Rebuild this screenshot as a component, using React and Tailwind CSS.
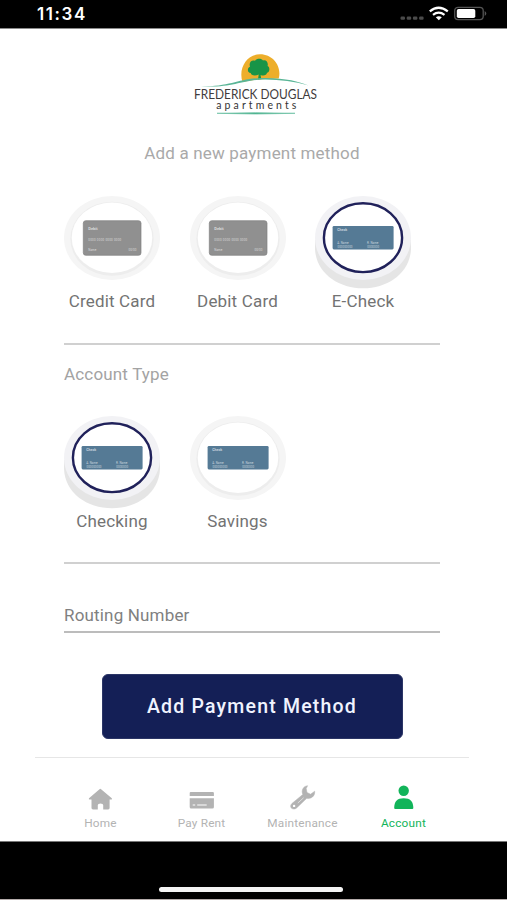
import React, { useState } from 'react';

const METHODS = [
  { key: 'credit', label: 'Credit Card', art: 'card' },
  { key: 'debit', label: 'Debit Card', art: 'card' },
  { key: 'echeck', label: 'E-Check', art: 'check' },
];

const ACCOUNT_TYPES = [
  { key: 'checking', label: 'Checking', art: 'check' },
  { key: 'savings', label: 'Savings', art: 'check' },
];

const TABS = [
  { key: 'home', label: 'Home', icon: HomeIcon },
  { key: 'pay', label: 'Pay Rent', icon: CardIcon },
  { key: 'maintenance', label: 'Maintenance', icon: WrenchIcon },
  { key: 'account', label: 'Account', icon: PersonIcon },
];

function HomeIcon() {
  return (
    <svg width="26" height="24" viewBox="0 0 26 24" fill="currentColor">
      <path d="M11.5 2.2 Q12.3 1.5 13.1 2.2 L23.8 11.2 Q24.5 12.3 23.3 12.6 H21.6 V21 Q21.6 22.4 20.1 22.4 H15.2 V18 Q15.2 16.4 12.5 16.4 Q9.8 16.4 9.8 18 V22.4 H5 Q3.5 22.4 3.5 21 V12.6 H1.6 Q0.3 12.3 1 11.2 Z" />
    </svg>
  );
}

function CardIcon() {
  return (
    <svg width="26" height="24" viewBox="0 0 26 24">
      <path d="M1.7 5 H23.9 Q24.9 5 24.9 6 V9 H0.7 V6 Q0.7 5 1.7 5 Z" fill="currentColor" />
      <path d="M0.7 11.3 H24.9 V20 Q24.9 21.5 23.4 21.5 H2.2 Q0.7 21.5 0.7 20 Z" fill="currentColor" />
      <path d="M3.7 18 H6.2 M8.2 18 H17.7" stroke="#fff" strokeWidth="1.2" />
    </svg>
  );
}

function WrenchIcon() {
  return (
    <svg width="26" height="24" viewBox="0 0 26 24" className="overflow-visible">
      <path
        d="M17.6 -1.3 C12.8 -0.6 11.2 3.6 12.8 7.5 L1.9 16.5 C-0.4 18.8 0.6 22 3.8 22 C5.4 22 6.5 21.2 7.4 20.2 L16.8 11.2 C21 12.2 25.2 9.2 24.7 4.2 L20.6 7.2 L17 5.5 L16.2 1.6 Z"
        fill="currentColor"
        stroke="currentColor"
        strokeWidth="0.5"
        strokeLinejoin="round"
      />
      <circle cx="4.1" cy="18.9" r="1.2" fill="#fff" />
      <path d="M7.8 16 L13.6 10.8" stroke="#dedede" strokeWidth="1" />
    </svg>
  );
}

function PersonIcon() {
  return (
    <svg width="26" height="24" viewBox="0 0 26 24" fill="currentColor" className="overflow-visible">
      <ellipse cx="12.7" cy="3.7" rx="5.2" ry="5.2" />
      <path d="M3.2 21 C3.2 14.5 6.1 11.3 12.7 11.3 C19.3 11.3 22.3 14.5 22.3 21 Q22.3 22 21.3 22 H4.2 Q3.2 22 3.2 21 Z" />
    </svg>
  );
}

function StatusBar() {
  return (
    <header className="flex h-7 shrink-0 items-center justify-between bg-black pl-[37px] pr-[19px]">
      <span className="font-['Inter',sans-serif] text-[17px] font-semibold leading-7 tracking-[1.6px] text-white">11:34</span>
      <svg width="88" height="16" viewBox="0 0 88 16" className="-mt-px">
        <g fill="#4b4b4b">
          <rect x="0.5" y="10.5" width="4.5" height="3.2" rx="1.2" />
          <rect x="6.7" y="10.5" width="4.5" height="3.2" rx="1.2" />
          <rect x="12.9" y="10.5" width="4.5" height="3.2" rx="1.2" />
          <rect x="19.1" y="10.5" width="4.5" height="3.2" rx="1.2" />
        </g>
        <g fill="none" stroke="#fff" strokeWidth="2.3">
          <path d="M29.8 5.3 Q38.5 -1.8 47.8 5.3" />
          <path d="M33 8.8 Q38.7 4.5 44.5 8.8" />
        </g>
        <path d="M35.8 11.3 Q38.8 9 41.8 11.3 L38.8 14.2 Z" fill="#fff" />
        <rect x="54.7" y="1.3" width="28.5" height="12.4" rx="3.4" fill="none" stroke="#555" strokeWidth="1.3" />
        <rect x="56.8" y="3" width="18.5" height="9" rx="1.8" fill="#fff" />
        <path d="M84.7 5 Q88 7.5 84.7 10 Z" fill="#555" />
      </svg>
    </header>
  );
}

function Logo() {
  return (
    <svg width="132" height="70" viewBox="0 0 132 70" className="shrink-0 overflow-visible">
      <path d="M52.5 32 C48 18 57 4.3 70 4.3 C83.5 4.3 92 17 88.7 28.5 Q70 28.5 52.5 32 Z" fill="#edae2b" />
      <path
        d="M68 29.5 L68.7 24.6 C65 26.2 60.8 25.4 60.7 23 C57.4 23 56.8 18 60 16.8 C58.5 12 62 9.5 65 10.8 C67 8 71.5 8.3 73 10.5 C76.5 9.5 78.5 13 77.6 16 C80.6 17.5 79.4 22.6 77 22.8 C76.7 25.7 73 26 70.6 25 L71.2 29 Z"
        fill="#189447"
      />
      <path d="M11 36.5 C42 36.5 48 28.5 72 28 C94 27.5 109 31.5 118 35.3 C104 31.5 89 29.4 73 29.6 C52 30 43 38 11 36.5 Z" fill="#59b596" />
      <text x="4" y="49.2" textLength="123" lengthAdjust="spacingAndGlyphs" fill="#3f3b3c" className="font-['Lato',sans-serif] text-[12.8px]">
        FREDERICK DOUGLAS
      </text>
      <text x="26.3" y="59.2" textLength="80" lengthAdjust="spacing" fill="#353334" className="font-['Lato',sans-serif] text-[10.5px]">
        apartments
      </text>
      <path d="M27 63.3 Q65 62 105 63.3 Q65 64.8 27 63.3 Z" fill="#3fae87" stroke="#6bc0a4" strokeWidth="0.7" />
    </svg>
  );
}

function CardArt() {
  return (
    <g>
      <rect x="19.3" y="25.7" width="57.7" height="34.6" rx="2.5" fill="#909090" stroke="#828282" strokeWidth="0.7" />
      <g fill="#dadada" className="font-['Roboto',sans-serif]">
        <text x="24.3" y="34.8" className="text-[4px] font-bold">Debit</text>
        <text x="24.3" y="45.6" textLength="33" className="text-[3px]">0000 0000 0000 0000</text>
        <text x="24.3" y="55.6" className="text-[3px]">Name</text>
        <text x="64.5" y="55.6" className="text-[3px]">00/00</text>
      </g>
    </g>
  );
}

function CheckArt() {
  return (
    <g>
      <rect x="17.6" y="31" width="61" height="23.4" rx="1.3" fill="#557a95" />
      <g fill="#c5d3dc" className="font-['Roboto',sans-serif]">
        <text x="22.2" y="35.8" className="text-[3.6px] font-bold">Check</text>
        <text x="22.2" y="48.6" className="text-[3px]">A. Name</text>
        <text x="22.5" y="52.9" textLength="15" className="text-[3px]">000000000</text>
        <text x="52" y="48.6" className="text-[3px]">R. Name</text>
        <text x="52.3" y="52.9" className="text-[3px]">0000000</text>
      </g>
    </g>
  );
}

// Round selector, raised on a thick grey base when selected
function Disc({ art, selected }) {
  return (
    <svg width="96" height="94" viewBox="0 0 96 94" className="block">
      {selected && <path d="M0 45 V54 C1 78 23 93.3 48 93.3 C73 93.3 95 78 96 54 V45 Z" fill="#e5e5e5" />}
      <ellipse cx="48" cy="43" rx="48" ry="42" fill={selected ? '#f2f2f5' : '#f5f5f5'} />
      {!selected && <ellipse cx="48" cy="43.8" rx="41.7" ry="37" fill="#ededed" />}
      <ellipse
        cx="48"
        cy="42.7"
        rx={selected ? 39.1 : 40.3}
        ry={selected ? 34.4 : 35.2}
        fill="#fff"
        stroke={selected ? '#20215a' : 'none'}
        strokeWidth="2.4"
      />
      {art === 'card' ? <CardArt /> : <CheckArt />}
    </svg>
  );
}

function OptionRow({ options, value, onChange }) {
  return (
    <div className="flex gap-[29.5px]">
      {options.map((o) => (
        <button key={o.key} onClick={() => onChange(o.key)} className="flex w-24 flex-col items-center">
          <Disc art={o.art} selected={value === o.key} />
          <span className="mt-[0.5px] whitespace-nowrap text-[17px] leading-[22px] tracking-[0.17px] text-[#737373]">{o.label}</span>
        </button>
      ))}
    </div>
  );
}

export default function App() {
  const [method, setMethod] = useState('echeck');
  const [accountType, setAccountType] = useState('checking');
  const [tab, setTab] = useState('account');

  return (
    <div className="flex h-[900px] w-[507px] flex-col overflow-hidden bg-white font-['Roboto',sans-serif]">
      <StatusBar />

      <main className="flex h-[729px] shrink-0 flex-col border-t border-[#8a8a8a] pl-16 pr-[67px]">
        <div className="ml-[126px] mt-[21px] h-[66px] shrink-0">
          <Logo />
        </div>
        <h1 className="mt-[26px] text-center text-[17px] leading-[22px] tracking-[0.17px] text-[#a9a9a9]">Add a new payment method</h1>

        <section className="mt-[31px] h-[150px] shrink-0 border-b-2 border-[#d0d0d0]">
          <OptionRow options={METHODS} value={method} onChange={setMethod} />
        </section>

        <h2 className="mt-[18px] text-[17px] leading-[22px] tracking-[0.17px] text-[#a3a3a3]">Account Type</h2>
        <section className="mt-[30.4px] h-[148.6px] shrink-0 border-b-2 border-[#d0d0d0]">
          <OptionRow options={ACCOUNT_TYPES} value={accountType} onChange={setAccountType} />
        </section>

        <input
          placeholder="Routing Number"
          className="mt-10 h-[29px] shrink-0 border-b-2 border-[#bcbcbc] pb-[5px] text-[17px] leading-[22px] tracking-[0.17px] outline-none placeholder:text-[#808080] placeholder:opacity-100"
        />

        <button className="mx-auto mt-[41px] h-[65px] w-[301px] shrink-0 rounded-[6px] border border-[#2b3566] bg-[#141f56] text-[19.5px] font-medium tracking-[1.2px] text-[#f0f3ff]">
          Add Payment Method
        </button>
      </main>

      <nav className="ml-[35px] mr-[38px] flex h-[84px] shrink-0 justify-center border-t border-[#e6e6e6] pt-[29px]">
        {TABS.map((t) => (
          <button
            key={t.key}
            onClick={() => setTab(t.key)}
            className={`flex w-[101px] flex-col items-center text-[11.8px] leading-4 tracking-[0.2px] ${tab === t.key ? 'text-[#12b45a]' : 'text-[#b3b3b3]'}`}
          >
            <t.icon />
            <span className="mt-1">{t.label}</span>
          </button>
        ))}
      </nav>

      <footer className="flex h-[58px] shrink-0 items-end justify-center border-t border-[#777] bg-black pb-[7px]">
        <div className="-ml-[5px] h-[5px] w-[184px] rounded-full bg-[#f5f5f5]" />
      </footer>
      <div className="h-px shrink-0 bg-[#b5adab]" />
    </div>
  );
}
